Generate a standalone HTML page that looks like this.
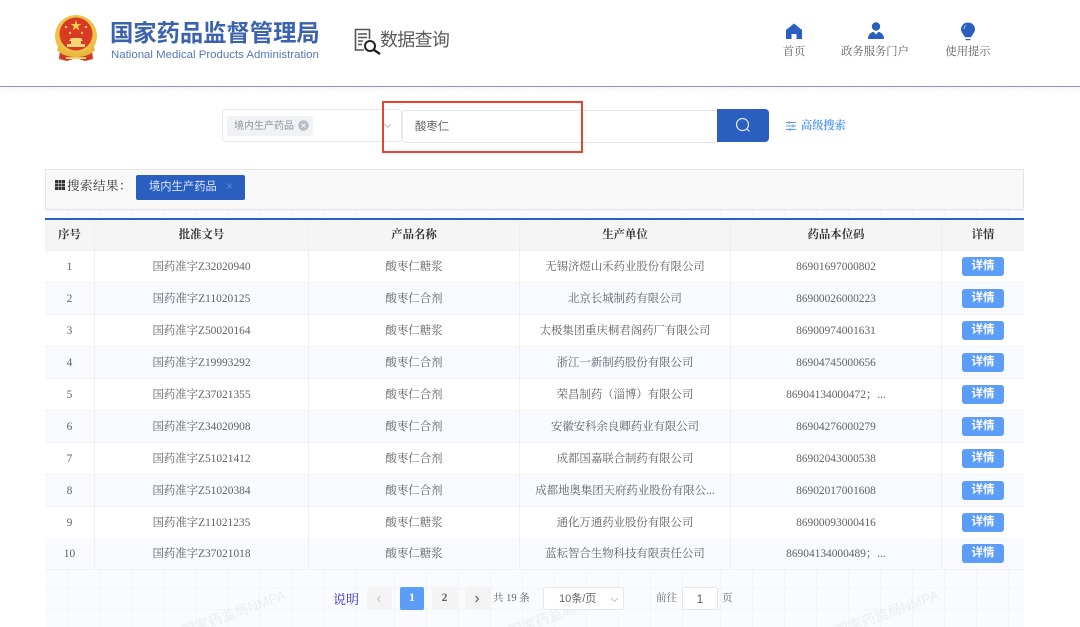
<!DOCTYPE html>
<html lang="zh"><head><meta charset="utf-8"><title>数据查询</title>
<style>
html,body{margin:0;padding:0;background:#fff}
#p{position:relative;width:1080px;height:627px;overflow:hidden;background:#fff;font-family:"Liberation Serif","Noto Serif CJK SC",serif;color:#606266}
.a{position:absolute;white-space:nowrap}
.s{font-family:"Liberation Sans","Noto Sans CJK SC",sans-serif}
.c{text-align:center}
.gl{position:absolute;top:205px;height:422px;background-color:#fafbfe;background-image:linear-gradient(#f3f4f8 1px,transparent 1px),linear-gradient(90deg,#f3f4f8 1px,transparent 1px);background-size:32px 21px;background-position:22px 5px}
.row{position:absolute;left:45px;width:979px;height:31px;background:#fff;border-bottom:1px solid #f1f2f8;font-size:11.4px;line-height:32px;color:#606266}
.row.e{background:#f9faff}
.cell{position:absolute;top:0;height:100%;text-align:center;border-right:1px solid #eff0f7;box-sizing:border-box;white-space:nowrap;overflow:hidden}
.c1{left:0;width:50px}.c2{left:50px;width:214px}.c3{left:264px;width:211px}.c4{left:475px;width:211px}.c5{left:686px;width:211px}.c6{left:897px;width:82px;border-right:0}
.btn{position:absolute;left:917px;top:6px;width:42px;height:19px;background:#5b9df7;border-radius:3px;color:#fff;font-size:11.5px;line-height:19px;text-align:center;font-family:"Liberation Sans","Noto Sans CJK SC",sans-serif;font-weight:bold}
.pg{position:absolute;top:587px;height:23px;width:25px;background:#f4f4f5;border-radius:2px;text-align:center;line-height:23px;font-size:11.500px;font-weight:bold;color:#606266}
.wm{font-size:14px;line-height:18px;color:#ebedf3;transform:rotate(-20deg)}
</style></head><body><div id="p">

<div class="a" style="left:0;top:86px;width:1080px;height:1px;background:#8b8fe8"></div>
<div class="a" style="left:0;top:87px;width:1080px;height:4px;background:repeating-linear-gradient(135deg,#f1f1f1 0 1px,#fff 1px 3px)"></div>

<svg class="a" style="left:54px;top:14px" width="44" height="48" viewBox="0 0 44 48">
<path d="M6 36l-1 9 8 2 9-3 9 3 8-2-1-9z" fill="#cf3a26"/>
<circle cx="22" cy="22" r="21" fill="#eec24a"/>
<circle cx="22" cy="20" r="16.500" fill="#d93a24"/>
<path d="M22 6l1.300 4h4l-3.200 2.400 1.200 4-3.300-2.400-3.300 2.400 1.200-4L16.700 10h4z" fill="#f3cc4f"/>
<circle cx="12" cy="13" r="1.200" fill="#f3cc4f"/><circle cx="32" cy="13" r="1.200" fill="#f3cc4f"/><circle cx="16" cy="19" r="1.200" fill="#f3cc4f"/><circle cx="28" cy="19" r="1.200" fill="#f3cc4f"/>
<path d="M17 24h10l2 3h-2v3h4v3H13v-3h4v-3h-2z" fill="#f5d778"/>
<path d="M5 31c4 7 12 8 17 8s13-1 17-8l2 5c-4 5-12 7-19 7S7 41 3 36z" fill="#e9b93e"/>
<path d="M12 43h20v2H12z" fill="#f2d06a"/>
</svg>

<div class="a s" style="left:110px;top:18px;font-size:23.300px;line-height:30px;color:#3a62ad;font-weight:bold">国家药品监督管理局</div>
<div class="a s" style="left:111px;top:48px;font-size:11.450px;line-height:15px;color:#5478ba">National Medical Products Administration</div>

<svg class="a" style="left:354px;top:28px" width="28" height="27" viewBox="0 0 28 27" fill="none">
<path d="M10 22H1.500V1.500h14V11" stroke="#555" stroke-width="1.600"/>
<path d="M4 6h9M4 9.500h9M4 13h5M4 16.500h4" stroke="#555" stroke-width="1.600"/>
<circle cx="16" cy="18" r="5" stroke="#222" stroke-width="2"/>
<path d="M20 22l6 4" stroke="#222" stroke-width="2.400"/>
</svg>
<div class="a s" style="left:380px;top:27px;font-size:18px;line-height:26px;color:#5a5a5a;letter-spacing:-.700px">数据查询</div>

<svg class="a" style="left:785px;top:23px" width="18" height="16" viewBox="0 0 18 16"><path d="M9 0.500L17 7V16h-5.500v-5h-5v5H1V7z" fill="#2a5fc0"/></svg>
<svg class="a" style="left:867px;top:22px" width="18" height="18" viewBox="0 0 18 18"><circle cx="9" cy="4.500" r="4.200" fill="#2a5fc0"/><path d="M1 17c0-4 2.500-6.500 5.500-7.200L9 12.500l2.500-2.700C14.500 10.500 17 13 17 17z" fill="#2a5fc0"/></svg>
<svg class="a" style="left:960px;top:22px" width="16" height="19" viewBox="0 0 16 19"><path d="M8 .5c4 0 7 3 7 6.800 0 3-2.300 5-4 8H5c-1.700-3-4-5-4-8C1 3.500 4 .5 8 .5z" fill="#2a5fc0"/><path d="M5.500 17h5v1.200h-5z" fill="#2a5fc0"/><path d="M4 7c0-2 1-3.200 2.500-3.800" stroke="#a9c3ee" fill="none"/></svg>
<div class="a c" style="left:774px;top:44px;width:40px;font-size:11.300px;line-height:16px;color:#606266">首页</div>
<div class="a c" style="left:835px;top:44px;width:80px;font-size:11.300px;line-height:16px;color:#606266">政务服务门户</div>
<div class="a c" style="left:938px;top:44px;width:60px;font-size:11.300px;line-height:16px;color:#606266">使用提示</div>

<div class="a" style="left:222px;top:109px;width:178px;height:31px;border:1px solid #e4e7ed;border-radius:4px;background:#fff"></div>
<div class="a s" style="left:227px;top:116px;width:86px;height:20px;background:#f0f2f5;border-radius:3px;font-size:10px;line-height:21px;color:#909399;text-indent:7px">境内生产药品</div>
<svg class="a" style="left:298px;top:120px" width="11" height="11" viewBox="0 0 11 11"><circle cx="5.500" cy="5.500" r="5.300" fill="#b9bcc3"/><path d="M3.500 3.500l4 4M7.500 3.500l-4 4" stroke="#f0f2f5" stroke-width="1"/></svg>
<svg class="a" style="left:383px;top:123px" width="9" height="6" viewBox="0 0 9 6" fill="none"><path d="M1 1l3.500 3.500L8 1" stroke="#c0c4cc"/></svg>
<div class="a" style="left:402px;top:110px;width:315px;height:31px;border:1px solid #e4e7ed;border-right:0;border-radius:4px 0 0 4px;background:#fff"></div>
<div class="a s" style="left:415px;top:119px;font-size:11.400px;line-height:17px;color:#606266">酸枣仁</div>
<div class="a" style="left:717px;top:109px;width:52px;height:33px;background:#2a5fc0;border-radius:0 4px 4px 0"></div>
<svg class="a" style="left:735px;top:117px" width="16" height="16" viewBox="0 0 16 16" fill="none"><circle cx="7.500" cy="7.500" r="6" stroke="#e4ecfa" stroke-width="1.200"/><path d="M12 12l2.500 2.500" stroke="#e4ecfa" stroke-width="1.200"/></svg>
<div class="a" style="left:382px;top:101px;width:197px;height:48px;border:2px solid #e8432e"></div>
<svg class="a" style="left:786px;top:121px" width="10" height="10" viewBox="0 0 10 10" fill="none" stroke="#5b9df7"><path d="M0 1.500h10M0 5h10M0 8.500h10"/><path d="M3 0v3M7 3.500v3M4 7v3" stroke-width="1"/></svg>
<div class="a" style="left:801px;top:118px;font-size:11.200px;line-height:17px;color:#5b9df7;font-weight:bold">高级搜索</div>

<div class="gl" style="left:45px;width:326.500px"></div>
<div class="gl" style="left:371.500px;width:326.500px"></div>
<div class="gl" style="left:698px;width:326px"></div>
<div class="a" style="left:45px;top:169px;width:977px;height:39px;background:#f8f8f8;border:1px solid #e6e6e6"></div>
<svg class="a" style="left:55px;top:180px" width="10" height="10" viewBox="0 0 10 10" fill="#333"><path d="M0 0h3v3H0zM3.500 0h3v3h-3zM7 0h3v3H7zM0 3.500h3v3H0zM3.500 3.500h3v3h-3zM7 3.500h3v3H7zM0 7h3v3H0zM3.500 7h3v3h-3zM7 7h3v3H7z"/></svg>
<div class="a" style="left:67px;top:177px;font-size:12.500px;line-height:18px;color:#333;letter-spacing:.500px">搜索结果：</div>
<div class="a s" style="left:136px;top:175px;width:109px;height:25px;background:#2a5fc0;border-radius:2px;font-size:11.300px;line-height:24px;color:#d9e6fb;text-indent:13px">境内生产药品</div>
<div class="a s" style="left:226px;top:179px;font-size:12px;line-height:15px;color:#5a85d0">×</div>

<div class="a" style="left:45px;top:218px;width:979px;height:2px;background:#2a5fc0"></div>
<div class="row" style="top:220px;height:30px;line-height:30px;background:#f5f5f5;color:#333;font-weight:bold;border-bottom:1px solid #eee">
<div class="cell c1" style="border-color:#eee">序号</div><div class="cell c2" style="border-color:#eee">批准文号</div><div class="cell c3" style="border-color:#eee">产品名称</div><div class="cell c4" style="border-color:#eee">生产单位</div><div class="cell c5" style="border-color:#eee">药品本位码</div><div class="cell c6">详情</div></div>

<div class="row" style="top:251px"><div class="cell c1">1</div><div class="cell c2">国药准字Z32020940</div><div class="cell c3">酸枣仁糖浆</div><div class="cell c4">无锡济煜山禾药业股份有限公司</div><div class="cell c5">86901697000802</div><div class="cell c6"></div><div class="btn">详情</div></div>
<div class="row e" style="top:283px"><div class="cell c1">2</div><div class="cell c2">国药准字Z11020125</div><div class="cell c3">酸枣仁合剂</div><div class="cell c4">北京长城制药有限公司</div><div class="cell c5">86900026000223</div><div class="cell c6"></div><div class="btn">详情</div></div>
<div class="row" style="top:315px"><div class="cell c1">3</div><div class="cell c2">国药准字Z50020164</div><div class="cell c3">酸枣仁糖浆</div><div class="cell c4">太极集团重庆桐君阁药厂有限公司</div><div class="cell c5">86900974001631</div><div class="cell c6"></div><div class="btn">详情</div></div>
<div class="row e" style="top:347px"><div class="cell c1">4</div><div class="cell c2">国药准字Z19993292</div><div class="cell c3">酸枣仁合剂</div><div class="cell c4">浙江一新制药股份有限公司</div><div class="cell c5">86904745000656</div><div class="cell c6"></div><div class="btn">详情</div></div>
<div class="row" style="top:379px"><div class="cell c1">5</div><div class="cell c2">国药准字Z37021355</div><div class="cell c3">酸枣仁合剂</div><div class="cell c4">荣昌制药（淄博）有限公司</div><div class="cell c5">86904134000472；...</div><div class="cell c6"></div><div class="btn">详情</div></div>
<div class="row e" style="top:411px"><div class="cell c1">6</div><div class="cell c2">国药准字Z34020908</div><div class="cell c3">酸枣仁合剂</div><div class="cell c4">安徽安科余良卿药业有限公司</div><div class="cell c5">86904276000279</div><div class="cell c6"></div><div class="btn">详情</div></div>
<div class="row" style="top:443px"><div class="cell c1">7</div><div class="cell c2">国药准字Z51021412</div><div class="cell c3">酸枣仁合剂</div><div class="cell c4">成都国嘉联合制药有限公司</div><div class="cell c5">86902043000538</div><div class="cell c6"></div><div class="btn">详情</div></div>
<div class="row e" style="top:475px"><div class="cell c1">8</div><div class="cell c2">国药准字Z51020384</div><div class="cell c3">酸枣仁合剂</div><div class="cell c4">成都地奥集团天府药业股份有限公...</div><div class="cell c5">86902017001608</div><div class="cell c6"></div><div class="btn">详情</div></div>
<div class="row" style="top:507px"><div class="cell c1">9</div><div class="cell c2">国药准字Z11021235</div><div class="cell c3">酸枣仁糖浆</div><div class="cell c4">通化万通药业股份有限公司</div><div class="cell c5">86900093000416</div><div class="cell c6"></div><div class="btn">详情</div></div>
<div class="row e" style="top:538px"><div class="cell c1">10</div><div class="cell c2">国药准字Z37021018</div><div class="cell c3">酸枣仁糖浆</div><div class="cell c4">蓝耘智合生物科技有限责任公司</div><div class="cell c5">86904134000489；...</div><div class="cell c6"></div><div class="btn">详情</div></div>

<div class="a s wm" style="left:179px;top:604px">国家药监局NMPA</div>
<div class="a s wm" style="left:505.500px;top:604px">国家药监局NMPA</div>
<div class="a s wm" style="left:832px;top:604px">国家药监局NMPA</div>

<div class="a" style="left:333px;top:591px;font-size:13px;line-height:18px;color:#2a2ad8">说明</div>
<div class="pg" style="left:367px"></div>
<svg class="a" style="left:375px;top:595px" width="8" height="8" viewBox="0 0 8 8" fill="none"><path d="M5.500 1L2.500 4l3 3" stroke="#c0c4cc" stroke-width="1"/></svg>
<div class="pg" style="left:400px;width:24px;background:#5b9df7;color:#fff">1</div>
<div class="pg" style="left:432px">2</div>
<div class="pg" style="left:465px"></div>
<svg class="a" style="left:473px;top:595px" width="8" height="8" viewBox="0 0 8 8" fill="none"><path d="M2.500 1l3 3-3 3" stroke="#555" stroke-width="1"/></svg>
<div class="a" style="left:493px;top:591px;font-size:10.500px;line-height:16px;color:#606266">共 19 条</div>
<div class="a s" style="left:543px;top:587px;width:79px;height:21px;border:1px solid #e4e7ed;border-radius:3px;background:#fff;font-size:11px;line-height:23px;color:#606266;text-indent:15px">10条/页</div>
<svg class="a" style="left:610px;top:597px" width="9" height="6" viewBox="0 0 9 6" fill="none"><path d="M1 1l3.500 3.500L8 1" stroke="#c0c4cc"/></svg>
<div class="a" style="left:656px;top:591px;font-size:10.500px;line-height:16px;color:#606266">前往</div>
<div class="a s c" style="left:682px;top:587px;width:34px;height:21px;border:1px solid #e4e7ed;border-radius:3px;background:#fff;font-size:12px;line-height:23px;color:#606266">1</div>
<div class="a" style="left:722px;top:591px;font-size:10.500px;line-height:16px;color:#606266">页</div>
</div></body></html>
